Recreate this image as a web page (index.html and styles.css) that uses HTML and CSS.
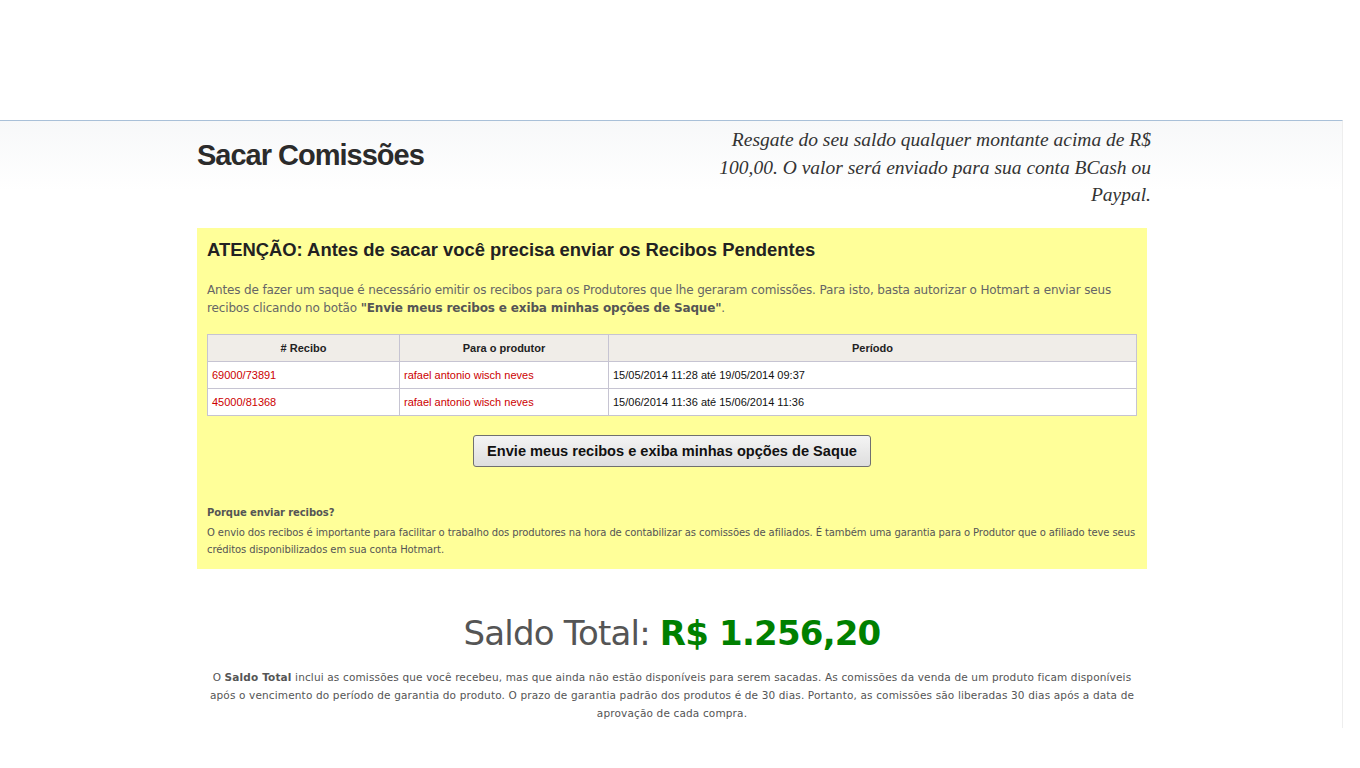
FILE: index.html
```
<!DOCTYPE html>
<html lang="pt-BR">
<head>
  <meta charset="UTF-8">
  <title>Sacar Comissões</title>
  <link rel="stylesheet" href="styles.css">
</head>
<body>

<div class="top"></div>

<div class="page">
  <div class="content">

    <div class="head">
      <h1>Sacar Comissões</h1>
      <p class="lead">Resgate do seu saldo qualquer montante acima de R$ 100,00. O valor será enviado para sua conta BCash ou Paypal.</p>
    </div>

    <div class="alert">
      <h2>ATENÇÃO: Antes de sacar você precisa enviar os Recibos Pendentes</h2>
      <p class="intro">Antes de fazer um saque é necessário emitir os recibos para os Produtores que lhe geraram comissões. Para isto, basta autorizar o Hotmart a enviar seus recibos clicando no botão <b>"Envie meus recibos e exiba minhas opções de Saque"</b>.</p>

      <table class="receipts">
        <thead>
          <tr>
            <th class="c1"># Recibo</th>
            <th class="c2">Para o produtor</th>
            <th>Período</th>
          </tr>
        </thead>
        <tbody>
          <tr>
            <td class="red">69000/73891</td>
            <td class="red">rafael antonio wisch neves</td>
            <td>15/05/2014 11:28 até 19/05/2014 09:37</td>
          </tr>
          <tr>
            <td class="red">45000/81368</td>
            <td class="red">rafael antonio wisch neves</td>
            <td>15/06/2014 11:36 até 15/06/2014 11:36</td>
          </tr>
        </tbody>
      </table>

      <div class="actions">
        <button type="button" class="btn">Envie meus recibos e exiba minhas opções de Saque</button>
      </div>

      <div class="why">
        <strong>Porque enviar recibos?</strong>
        <p>O envio dos recibos é importante para facilitar o trabalho dos produtores na hora de contabilizar as comissões de afiliados. É também uma garantia para o Produtor que o afiliado teve seus créditos disponibilizados em sua conta Hotmart.</p>
      </div>
    </div>

    <div class="balance">
      <div class="total">Saldo Total: <span class="amount">R$ 1.256,20</span></div>
      <p>O <b>Saldo Total</b> inclui as comissões que você recebeu, mas que ainda não estão disponíveis para serem sacadas. As comissões da venda de um produto ficam disponíveis após o vencimento do período de garantia do produto. O prazo de garantia padrão dos produtos é de 30 dias. Portanto, as comissões são liberadas 30 dias após a data de aprovação de cada compra.</p>
    </div>

  </div>
</div>

</body>
</html>
```

FILE: styles.css
```
body {
  margin: 0;
  padding: 0;
  background-color: #fff;
  font-family: "DejaVu Sans", Verdana, sans-serif;
}

.top {
  height: 120px;
}

.page {
  width: 1342px;
  min-height: 607px;
  border-top: 1px solid #a9c0d8;
  border-right: 1px solid #eeeeee;
  background: linear-gradient(#f7f8f9, #ffffff 70px);
}

.content {
  width: 950px;
  margin-left: 197px;
}

.head {
  display: flex;
  justify-content: space-between;
  align-items: flex-start;
  height: 107px;
}

h1 {
  margin: 18px 0 0;
  font-family: "Liberation Sans", Arial, sans-serif;
  font-size: 29px;
  font-weight: bold;
  letter-spacing: -1px;
  color: #2b2b2b;
}

.lead {
  width: 445px;
  margin: 5px -4px 0 0;
  font-family: "Liberation Serif", Georgia, serif;
  font-style: italic;
  font-size: 19.5px;
  line-height: 27.5px;
  text-align: right;
  color: #333;
}

/* yellow notice */
.alert {
  background-color: #ffff99;
  padding: 10px 10px 11px;
}

.alert h2 {
  margin: 1px 0 0;
  font-family: "Liberation Sans", Arial, sans-serif;
  font-size: 18.4px;
  line-height: 22px;
  color: #222;
}

.intro {
  margin: 20px 0 17px;
  font-size: 12px;
  letter-spacing: -0.15px;
  line-height: 18px;
  color: #666;
}

.intro b {
  color: #555;
}

.receipts {
  width: 100%;
  border-collapse: collapse;
  background-color: #fff;
  font-family: "Liberation Sans", Arial, sans-serif;
  font-size: 11px;
}

.receipts th,
.receipts td {
  border: 1px solid #c6c4d2;
  height: 26px;
  padding: 0 4px;
}

.receipts th {
  background-color: #f0ede8;
  font-weight: bold;
  color: #222;
}

.receipts td {
  text-align: left;
  color: #111;
}

.receipts .c1 {
  width: 183px;
}

.receipts .c2 {
  width: 200px;
}

.receipts td.red {
  color: #cc0000;
}

.actions {
  text-align: center;
  padding-top: 19px;
}

.btn {
  width: 398px;
  height: 32px;
  font-family: "Liberation Sans", Arial, sans-serif;
  font-size: 14.6px;
  font-weight: bold;
  color: #111;
  background: linear-gradient(#f4f4f4, #dedede);
  border: 1px solid #707070;
  border-radius: 3px;
  cursor: pointer;
}

.btn:hover {
  background: linear-gradient(#eaf6fd, #bee6fd);
}

.why {
  margin-top: 37px;
  font-size: 10px;
  letter-spacing: -0.1px;
  line-height: 17px;
  color: #555;
}

.why strong {
  display: block;
  line-height: 18px;
  margin-bottom: 2px;
}

.why p {
  margin: 0;
}

/* saldo */
.balance {
  text-align: center;
  padding-top: 39px;
}

.total {
  font-size: 34px;
  letter-spacing: -0.8px;
  line-height: 50px;
  color: #555;
}

.amount {
  font-weight: bold;
  color: #008000;
}

.balance p {
  margin: 10px 8px 0;
  font-size: 10.5px;
  letter-spacing: 0.15px;
  line-height: 18px;
  color: #555;
}
```
